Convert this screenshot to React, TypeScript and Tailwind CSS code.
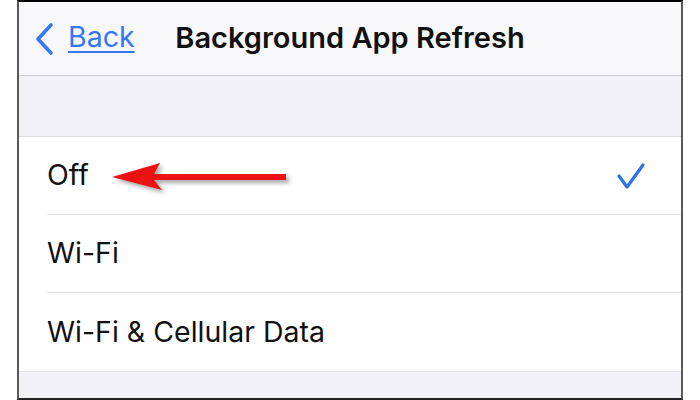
const options = [
  { label: "Off", checked: true },
  { label: "Wi-Fi", checked: false },
  { label: "Wi-Fi & Cellular Data", checked: false },
];

export default function App() {
  return (
    <div className="w-[700px] h-[400px] bg-white font-['Inter',sans-serif]">
      <div className="relative ml-[17px] w-[666px] h-[400px] flex flex-col border-l-2 border-r-2 border-t-2 border-b-2 border-l-[#5a5a5a] border-r-[#5a5a5a] border-t-black border-b-[#222] overflow-hidden">
        {/* Nav bar */}
        <div className="relative h-[74px] bg-[#f8f8fa] border-b border-[#cfcfd3] flex items-center justify-center">
          <div className="absolute left-[14px] top-0 h-full flex items-center gap-[13px] text-[#3478f6]">
            <svg width="22" height="34" viewBox="0 0 22 34" fill="none" stroke="currentColor" strokeWidth="3.6" strokeLinecap="round" strokeLinejoin="round">
              <polyline points="18,3 5,17 18,31" />
            </svg>
            <span className="text-[28.5px] underline underline-offset-[4px] decoration-[1.5px] mt-[-2px]">Back</span>
          </div>
          <span className="text-[29px] font-semibold text-[#111] mt-[-2px]">Background App Refresh</span>
        </div>

        {/* Grouped gap */}
        <div className="h-[61px] bg-[#f2f2f6] border-b border-[#dcdce0]" />

        {/* Options */}
        <div className="bg-white flex flex-col">
          {options.map((o, i) => (
            <div key={o.label} className="pl-[28px]">
              <div className={`h-[78px] flex items-center justify-between pr-[35px] ${i < options.length - 1 ? "border-b border-[#e2e2e4]" : ""}`}>
                <span className="text-[28.5px] text-[#111]">{o.label}</span>
                {o.checked && (
                  <svg width="30" height="28" viewBox="0 0 30 28" fill="none" stroke="#2f72e8" strokeWidth="3.2" strokeLinecap="round" strokeLinejoin="round">
                    <polyline points="3,14 11,25 27,3" />
                  </svg>
                )}
              </div>
            </div>
          ))}
        </div>
        <div className="flex-1 bg-[#f2f2f6] border-t border-[#e4e4e8]" />

        {/* Red arrow annotation */}
        <svg className="absolute left-[90px] top-[157px]" width="210" height="42" viewBox="0 0 210 42" style={{ filter: "drop-shadow(3px 3px 2px rgba(0,0,0,0.35))" }}>
          <path d="M3 18 L51 4 L45 15 L177 15 L177 21 L45 21 L53 31 Z" fill="#ee1111" />
        </svg>
      </div>
    </div>
  );
}
